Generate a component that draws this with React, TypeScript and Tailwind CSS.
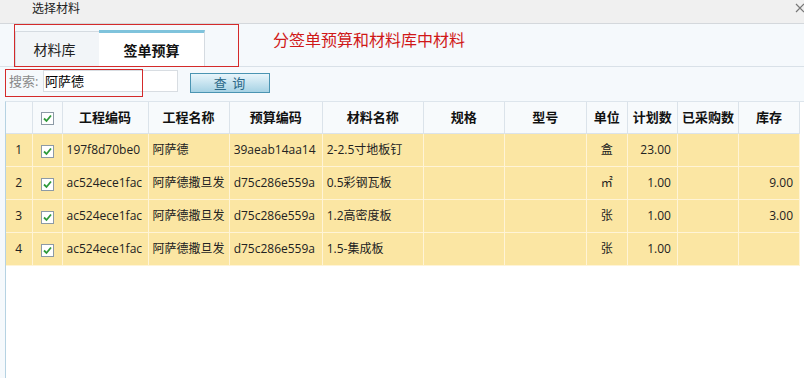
import React from "react";

const cols = [26, 30, 86, 81, 93, 101, 81, 82, 41, 50, 61, 61];
const headers = ["", "", "工程编码", "工程名称", "预算编码", "材料名称", "规格", "型号", "单位", "计划数", "已采购数", "库存"];

const rows = [
  ["1", "197f8d70be0", "阿萨德", "39aeab14aa14", "2-2.5寸地板钉", "", "", "盒", "23.00", "", ""],
  ["2", "ac524ece1fac", "阿萨德撒旦发", "d75c286e559a", "0.5彩钢瓦板", "", "", "㎡", "1.00", "", "9.00"],
  ["3", "ac524ece1fac", "阿萨德撒旦发", "d75c286e559a", "1.2高密度板", "", "", "张", "1.00", "", "3.00"],
  ["4", "ac524ece1fac", "阿萨德撒旦发", "d75c286e559a", "1.5-集成板", "", "", "张", "1.00", "", ""],
];

function Check() {
  return (
    <span className="inline-flex w-[13px] h-[13px] border border-[#8c9aa6] bg-white items-center justify-center align-middle">
      <svg width="9" height="9" viewBox="0 0 9 9">
        <path d="M1 4.5 L3.5 7 L8 1.5" stroke="#2f9a3a" strokeWidth="1.8" fill="none" />
      </svg>
    </span>
  );
}

export default function App() {
  const font = { fontFamily: '"Open Sans","Noto Sans CJK SC",sans-serif' };
  return (
    <div
      className="w-[804px] h-[378px] overflow-hidden bg-[#f5f9fc] flex flex-col relative text-[#222]"
      style={font}
    >
      {/* title bar */}
      <div className="h-[24px] shrink-0 bg-[#f0f0f0] border-b border-[#d4d8dc] flex items-center pl-[32px] relative">
        <span className="text-[12px] text-[#222] leading-none -mt-[6px]">选择材料</span>
        <svg className="absolute left-[795px] top-[3px]" width="10" height="10" viewBox="0 0 10 10">
          <path d="M1 1 L9 9 M9 1 L1 9" stroke="#777" strokeWidth="1.2" fill="none" />
        </svg>
      </div>

      {/* tabs */}
      <div className="h-[43px] shrink-0 relative flex items-end pl-[15px] border-b border-[#d9e1e8]">
        <div className="w-[84px] h-[36px] bg-[#f2f5f8] border-t border-l border-[#d5dbe1] flex items-center justify-center text-[14px] text-[#222] -mb-px pr-[6px]">
          材料库
        </div>
        <div className="w-[106px] h-[37px] bg-white border-t-[3px] border-t-[#7fc3dc] border-r border-r-[#d5dbe1] flex items-center justify-center text-[14px] font-bold text-[#111] -mb-px">
          签单预算
        </div>
        <div className="ml-[68px] self-start mt-[6px] text-[16px] text-[#d01818] leading-[20px]">分签单预算和材料库中材料</div>
        <div className="absolute left-[14px] top-0 w-[225px] h-[43px] border border-[#d42a2a]" />
      </div>

      {/* search */}
      <div className="h-[34px] shrink-0 relative flex items-start pl-[9px] pt-[3px]">
        <span className="text-[13px] text-[#8a8a8a] leading-[22px] w-[34px]">搜索:</span>
        <div className="w-[135px] h-[22px] bg-white border border-[#d8dde2] text-[13px] leading-[20px] pl-[1px] text-black">阿萨德</div>
        <button className="ml-[12px] mt-[3px] w-[80px] h-[20px] border border-[#4a94b2] bg-gradient-to-b from-[#e8f5fb] to-[#a6d2e4] text-[13px] leading-[18px] text-[#2a6888] tracking-[1px]">
          查 询
        </button>
        <div className="absolute left-[5px] top-[2px] w-[138px] h-[28px] border border-[#d42a2a]" />
      </div>

      {/* table area */}
      <div className="flex-1 ml-[5px] bg-white border-l border-[#b5d2e2] border-t border-t-[#dde5ec]">
        <table className="border-collapse table-fixed" style={{ width: 794 }}>
          <colgroup>
            {cols.map((w, i) => (
              <col key={i} style={{ width: w }} />
            ))}
          </colgroup>
          <thead>
            <tr className="h-[31px] bg-[#f7fafc]">
              {headers.map((h, i) => (
                <th
                  key={i}
                  className="border-r border-b border-[#dbe3ea] text-[13px] font-bold text-[#111] text-center p-0"
                >
                  {i === 1 ? <Check /> : h}
                </th>
              ))}
            </tr>
          </thead>
          <tbody>
            {rows.map((r, ri) => (
              <tr key={ri} className="h-[33px] bg-[#fbe6a3]">
                <td className="border-r border-b border-[#fff4d6] text-[12px] text-center p-0">{r[0]}</td>
                <td className="border-r border-b border-[#fff4d6] text-center p-0">
                  <Check />
                </td>
                {r.slice(1).map((c, ci) => {
                  const idx = ci + 2;
                  const right = idx >= 9;
                  const center = idx === 8;
                  return (
                    <td
                      key={ci}
                      className={
                        "border-r border-b border-[#fff4d6] text-[12px] text-[#222] whitespace-nowrap overflow-hidden p-0 " +
                        (right ? "text-right pr-[6px]" : center ? "text-center" : "text-left pl-[4px]")
                      }
                    >
                      {c}
                    </td>
                  );
                })}
              </tr>
            ))}
          </tbody>
        </table>
      </div>
    </div>
  );
}
